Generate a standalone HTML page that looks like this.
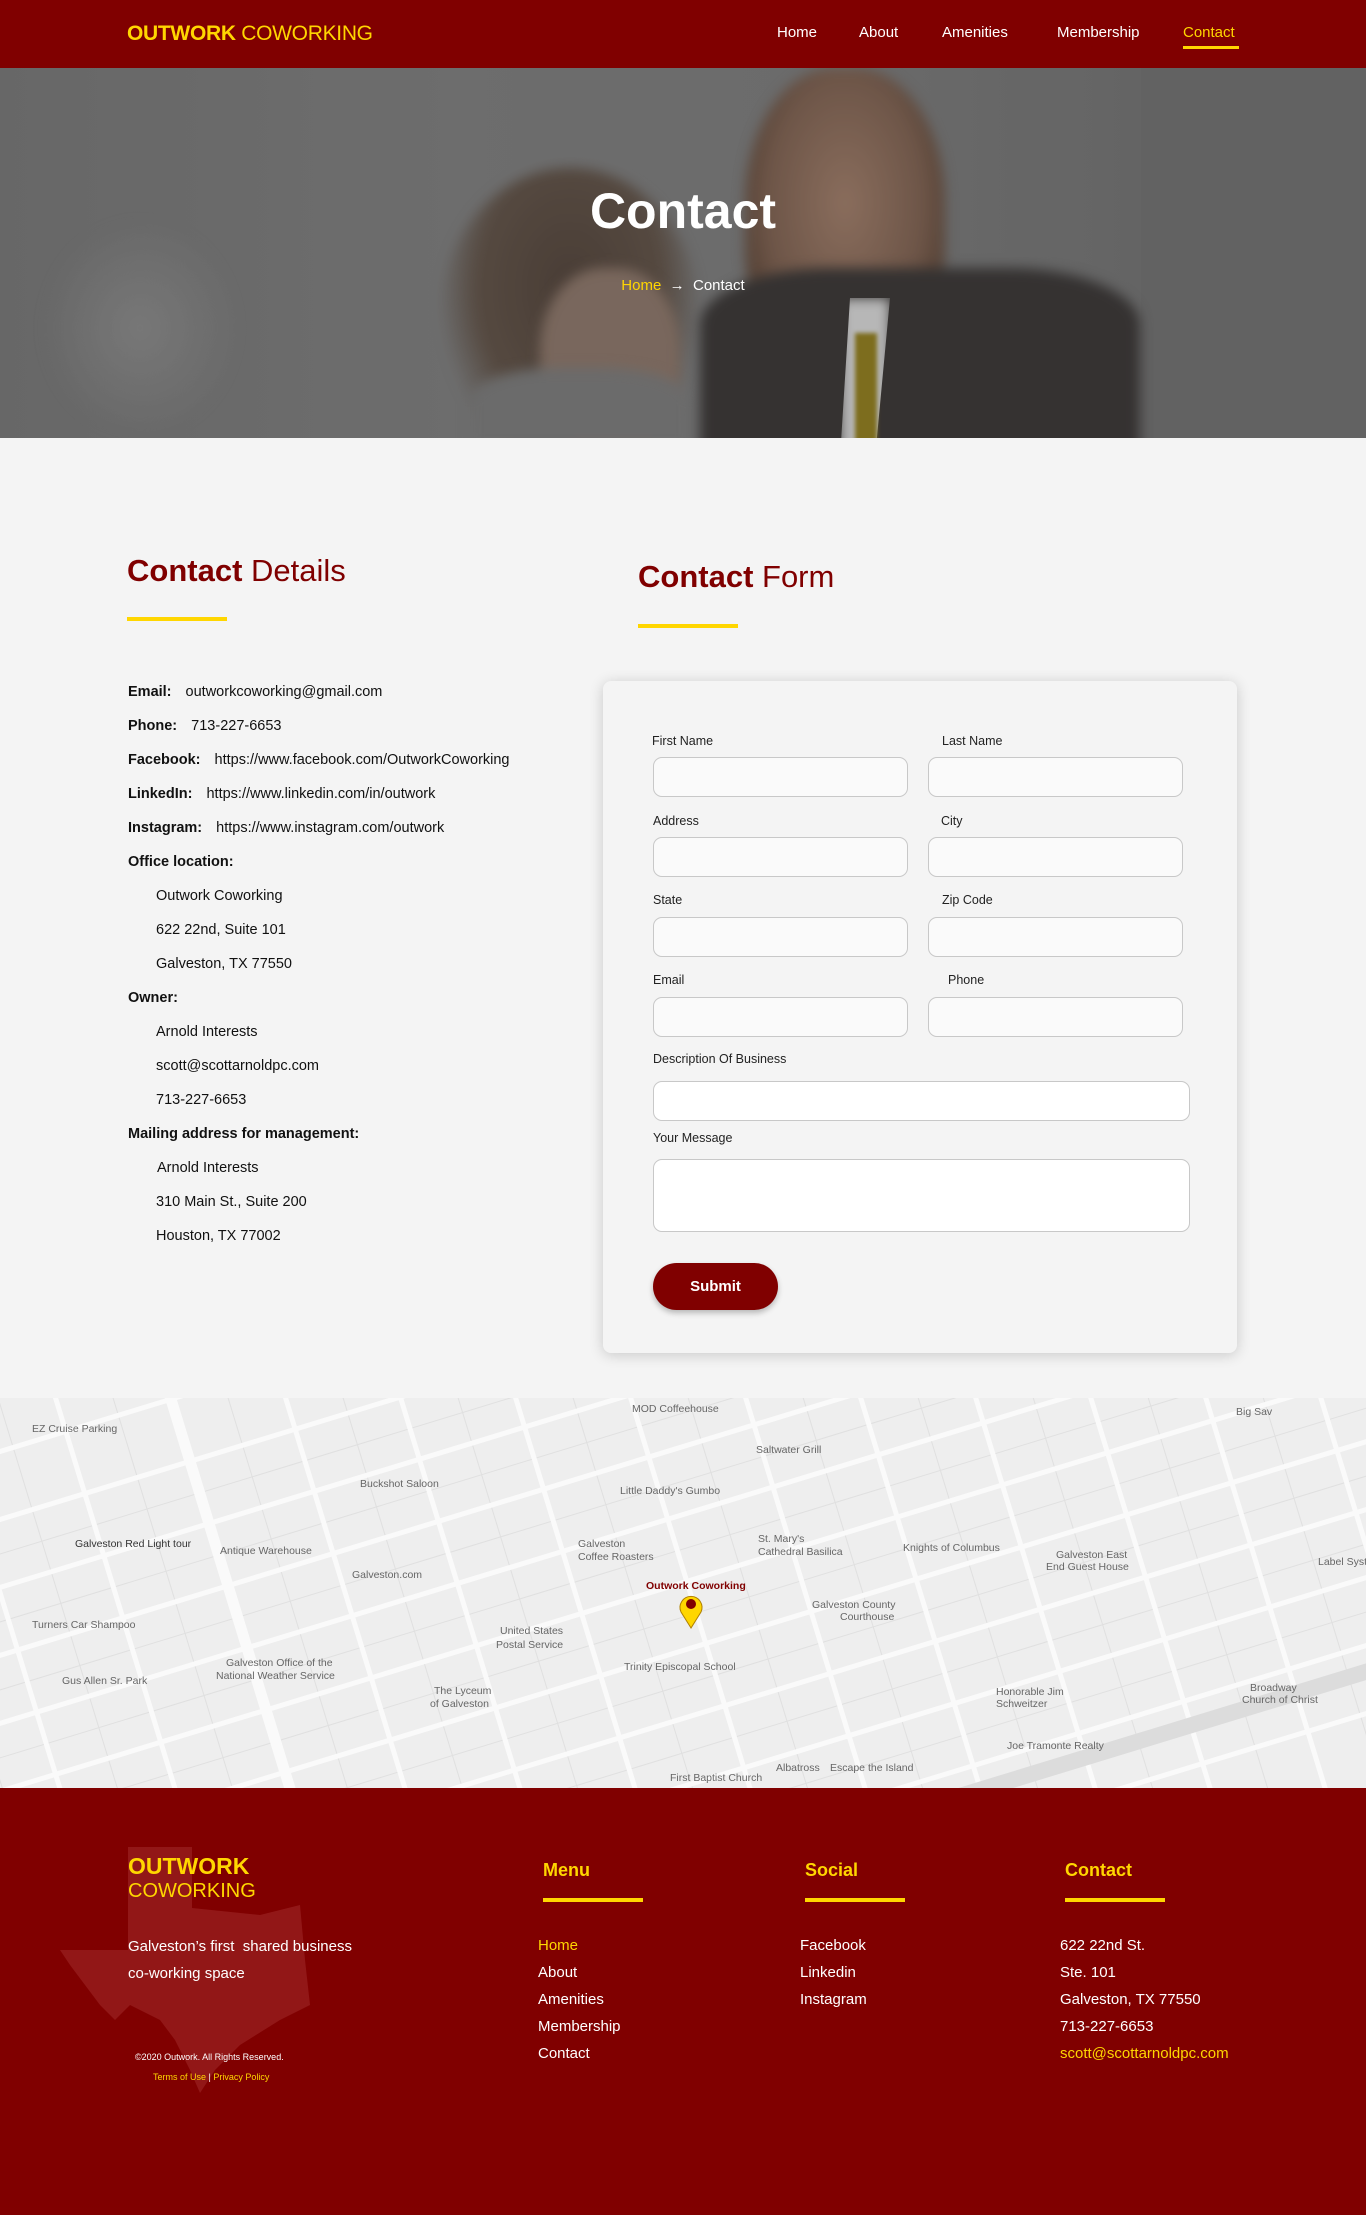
<!DOCTYPE html>
<html><head><meta charset="utf-8"><style>
*{margin:0;padding:0;box-sizing:border-box}
html{width:1366px;height:2215px;overflow:hidden}
body{width:1366px;height:2215px;background:#f4f4f4;font-family:"Liberation Sans",sans-serif;position:relative;overflow:hidden}
.abs{position:absolute}
nav{position:absolute;top:0;left:0;width:1366px;height:68px;background:#800000}
.logo{left:127px;top:22px;font-size:21px;color:#ffd600;letter-spacing:-0.3px}
.nav a{position:absolute;top:24px;font-size:15px;color:#fff;text-decoration:none}
.hero{top:68px;left:0;width:1366px;height:370px;background:#6b6b6b;overflow:hidden}
.bl{filter:blur(6px)}
h2{position:absolute;font-size:31px;color:#800000;font-weight:normal}
h2 b{font-weight:bold}
.ul{position:absolute;height:4px;width:100px;background:#ffd600}
.det{position:absolute;left:128px;font-size:14.5px;color:#111}
.det b{font-weight:bold;margin-right:10px}
.card{left:603px;top:681px;width:634px;height:672px;background:#f4f4f4;border-radius:8px;box-shadow:0 2px 14px rgba(0,0,0,.18)}
.lbl{position:absolute;font-size:12.5px;color:#222}
.inp{position:absolute;height:40px;border:1px solid #c8c8c8;border-radius:9px;background:#fafafa}
.btn{left:653px;top:1263px;width:125px;height:47px;border-radius:24px;background:#800000;color:#fff;font-weight:bold;font-size:15px;text-align:center;line-height:47px;box-shadow:0 3px 6px rgba(0,0,0,.25)}
footer{position:absolute;top:1788px;left:0;width:1366px;height:427px;background:#800000}
.fh{position:absolute;top:1860px;font-size:18px;font-weight:bold;color:#ffd600}
.ful{position:absolute;top:1898px;width:100px;height:4px;background:#ffd600}
.fl{position:absolute;font-size:15px;color:#fff;line-height:27px}
.map text{font-family:"Liberation Sans",sans-serif;font-size:10.5px;fill:#666}
</style></head><body>
<nav>
<div class="abs logo"><b>OUTWORK</b> COWORKING</div>
<div class="nav">
<a style="left:777px">Home</a><a style="left:859px">About</a><a style="left:942px">Amenities</a><a style="left:1057px">Membership</a><a style="left:1183px;color:#ffd600">Contact</a>
</div>
<div class="abs" style="left:1183px;top:46px;width:56px;height:3px;background:#ffd600"></div>
</nav>
<div class="abs hero">
<div class="abs" style="left:0;top:0;width:1141px;height:370px;background:linear-gradient(90deg,#727272,#7a7a7a 40%,#777 70%,#6e6e6e)"></div>
<div class="abs bl" style="left:40px;top:150px;width:200px;height:220px;background:radial-gradient(ellipse,#888,transparent 70%)"></div>
<div class="abs bl" style="left:440px;top:100px;width:260px;height:300px;border-radius:50% 50% 10% 10%;background:radial-gradient(ellipse at 50% 40%,#4a3a30,#5a4a3e 50%,transparent 72%)"></div>
<div class="abs bl" style="left:540px;top:200px;width:140px;height:180px;border-radius:45%;background:#8a7264"></div>
<div class="abs bl" style="left:470px;top:300px;width:220px;height:80px;background:#777;border-radius:40% 40% 0 0"></div>
<div class="abs bl" style="left:745px;top:0;width:200px;height:300px;border-radius:45% 45% 40% 40%;background:radial-gradient(ellipse at 50% 45%,#a07a64,#7a5a48 55%,#5a4030 75%,transparent 80%)"></div>
<div class="abs bl" style="left:700px;top:200px;width:440px;height:190px;background:#2f2b2a;border-radius:30% 30% 0 0"></div>
<div class="abs bl" style="left:840px;top:230px;width:50px;height:160px;background:#ddd;clip-path:polygon(20% 0,100% 0,70% 100%,0 100%)"></div>
<div class="abs" style="left:855px;top:265px;width:22px;height:110px;background:#8f7a10;filter:blur(2px)"></div>
<div class="abs" style="left:0;top:0;width:1366px;height:370px;background:rgba(70,70,70,.25)"></div>
<div class="abs" style="left:0;top:114px;width:1366px;text-align:center;font-size:50px;font-weight:bold;color:#fff">Contact</div>
<div class="abs" style="left:0;top:209px;width:1366px;text-align:center;font-size:15px;color:#fff"><span style="color:#ffd600">Home</span> &nbsp;→&nbsp; Contact</div>
</div>

<h2 style="left:127px;top:553px"><b>Contact</b> Details</h2>
<div class="ul" style="left:127px;top:617px"></div>
<h2 style="left:638px;top:559px"><b>Contact</b> Form</h2>
<div class="ul" style="left:638px;top:624px"></div>

<div class="det" style="top:684px"><b>Email:</b> outworkcoworking@gmail.com</div>
<div class="det" style="top:718px"><b>Phone:</b> 713-227-6653</div>
<div class="det" style="top:752px"><b>Facebook:</b> https://www.facebook.com/OutworkCoworking</div>
<div class="det" style="top:786px"><b>LinkedIn:</b> https://www.linkedin.com/in/outwork</div>
<div class="det" style="top:820px"><b>Instagram:</b> https://www.instagram.com/outwork</div>
<div class="det" style="top:854px"><b>Office location:</b></div>
<div class="det" style="top:888px;left:156px">Outwork Coworking</div>
<div class="det" style="top:922px;left:156px">622 22nd, Suite 101</div>
<div class="det" style="top:956px;left:156px">Galveston, TX 77550</div>
<div class="det" style="top:990px"><b>Owner:</b></div>
<div class="det" style="top:1024px;left:156px">Arnold Interests</div>
<div class="det" style="top:1058px;left:156px">scott@scottarnoldpc.com</div>
<div class="det" style="top:1092px;left:156px">713-227-6653</div>
<div class="det" style="top:1126px"><b>Mailing address for management:</b></div>
<div class="det" style="top:1160px;left:157px">Arnold Interests</div>
<div class="det" style="top:1194px;left:156px">310 Main St., Suite 200</div>
<div class="det" style="top:1228px;left:156px">Houston, TX 77002</div>

<div class="abs card"></div>
<div class="lbl" style="left:652px;top:734px">First Name</div><div class="lbl" style="left:942px;top:734px">Last Name</div>
<div class="inp" style="left:653px;top:757px;width:255px"></div><div class="inp" style="left:928px;top:757px;width:255px"></div>
<div class="lbl" style="left:653px;top:814px">Address</div><div class="lbl" style="left:941px;top:814px">City</div>
<div class="inp" style="left:653px;top:837px;width:255px"></div><div class="inp" style="left:928px;top:837px;width:255px"></div>
<div class="lbl" style="left:653px;top:893px">State</div><div class="lbl" style="left:942px;top:893px">Zip Code</div>
<div class="inp" style="left:653px;top:917px;width:255px"></div><div class="inp" style="left:928px;top:917px;width:255px"></div>
<div class="lbl" style="left:653px;top:973px">Email</div><div class="lbl" style="left:948px;top:973px">Phone</div>
<div class="inp" style="left:653px;top:997px;width:255px"></div><div class="inp" style="left:928px;top:997px;width:255px"></div>
<div class="lbl" style="left:653px;top:1052px">Description Of Business</div>
<div class="inp" style="left:653px;top:1081px;width:537px;background:#fff"></div>
<div class="lbl" style="left:653px;top:1131px">Your Message</div>
<div class="inp" style="left:653px;top:1159px;width:537px;height:73px;background:#fff"></div>
<div class="abs btn">Submit</div>

<svg class="abs map" style="left:0;top:1398px;overflow:hidden" width="1366" height="390" viewBox="0 0 1366 390">
<rect width="1366" height="390" fill="#eeeeee"/>
<g transform="rotate(-17 683 195)" fill="none">
<g stroke="#e0e0e0" stroke-width="1">
<line x1="-400" y1="-42" x2="1800" y2="-42"/><line x1="-400" y1="23" x2="1800" y2="23"/><line x1="-400" y1="88" x2="1800" y2="88"/><line x1="-400" y1="153" x2="1800" y2="153"/><line x1="-400" y1="218" x2="1800" y2="218"/><line x1="-400" y1="283" x2="1800" y2="283"/><line x1="-400" y1="348" x2="1800" y2="348"/><line x1="-400" y1="413" x2="1800" y2="413"/>
<line x1="-25" y1="-400" x2="-25" y2="800"/><line x1="85" y1="-400" x2="85" y2="800"/><line x1="195" y1="-400" x2="195" y2="800"/><line x1="305" y1="-400" x2="305" y2="800"/><line x1="415" y1="-400" x2="415" y2="800"/><line x1="525" y1="-400" x2="525" y2="800"/><line x1="635" y1="-400" x2="635" y2="800"/><line x1="745" y1="-400" x2="745" y2="800"/><line x1="855" y1="-400" x2="855" y2="800"/><line x1="965" y1="-400" x2="965" y2="800"/><line x1="1075" y1="-400" x2="1075" y2="800"/><line x1="1185" y1="-400" x2="1185" y2="800"/><line x1="1295" y1="-400" x2="1295" y2="800"/>
</g>
<g stroke="#fafafa" stroke-width="5">
<line x1="-400" y1="-140" x2="1800" y2="-140"/><line x1="-400" y1="-75" x2="1800" y2="-75"/><line x1="-400" y1="-10" x2="1800" y2="-10"/><line x1="-400" y1="55" x2="1800" y2="55"/><line x1="-400" y1="120" x2="1800" y2="120"/><line x1="-400" y1="185" x2="1800" y2="185"/><line x1="-400" y1="250" x2="1800" y2="250"/><line x1="-400" y1="315" x2="1800" y2="315"/><line x1="-400" y1="380" x2="1800" y2="380"/><line x1="-400" y1="445" x2="1800" y2="445"/><line x1="-400" y1="510" x2="1800" y2="510"/>
<line x1="-80" y1="-400" x2="-80" y2="800"/><line x1="30" y1="-400" x2="30" y2="800"/><line x1="140" y1="-400" x2="140" y2="800"/><line x1="360" y1="-400" x2="360" y2="800"/><line x1="470" y1="-400" x2="470" y2="800"/><line x1="580" y1="-400" x2="580" y2="800"/><line x1="690" y1="-400" x2="690" y2="800"/><line x1="800" y1="-400" x2="800" y2="800"/><line x1="910" y1="-400" x2="910" y2="800"/><line x1="1020" y1="-400" x2="1020" y2="800"/><line x1="1130" y1="-400" x2="1130" y2="800"/><line x1="1240" y1="-400" x2="1240" y2="800"/><line x1="1350" y1="-400" x2="1350" y2="800"/><line x1="1460" y1="-400" x2="1460" y2="800"/>
</g>
<line x1="250" y1="-400" x2="250" y2="800" stroke="#fafafa" stroke-width="11"/>
<line x1="-400" y1="470" x2="1800" y2="470" stroke="#dcdcdc" stroke-width="16"/>
</g>
<text x="32" y="34">EZ Cruise Parking</text>
<text x="360" y="89">Buckshot Saloon</text>
<text x="75" y="149" style="fill:#333">Galveston Red Light tour</text>
<text x="220" y="156">Antique Warehouse</text>
<text x="352" y="180">Galveston.com</text>
<text x="32" y="230">Turners Car Shampoo</text>
<text x="62" y="286">Gus Allen Sr. Park</text>
<text x="226" y="268">Galveston Office of the</text>
<text x="216" y="281">National Weather Service</text>
<text x="500" y="236">United States</text><text x="496" y="250">Postal Service</text>
<text x="434" y="296">The Lyceum</text><text x="430" y="309">of Galveston</text>
<text x="632" y="14">MOD Coffeehouse</text>
<text x="620" y="96">Little Daddy's Gumbo</text>
<text x="578" y="149">Galveston</text><text x="578" y="162">Coffee Roasters</text>
<text x="756" y="55">Saltwater Grill</text>
<text x="758" y="144">St. Mary's</text><text x="758" y="157">Cathedral Basilica</text>
<text x="903" y="153">Knights of Columbus</text>
<text x="812" y="210">Galveston County</text><text x="840" y="222">Courthouse</text>
<text x="624" y="272">Trinity Episcopal School</text>
<text x="1056" y="160">Galveston East</text><text x="1046" y="172">End Guest House</text>
<text x="1236" y="17">Big Sav</text>
<text x="1250" y="293">Broadway</text><text x="1242" y="305">Church of Christ</text>
<text x="996" y="297">Honorable Jim</text><text x="996" y="309">Schweitzer</text>
<text x="1007" y="351">Joe Tramonte Realty</text>
<text x="776" y="373">Albatross</text>
<text x="830" y="373">Escape the Island</text>
<text x="670" y="383">First Baptist Church</text>
<text x="1318" y="167">Label Syste</text>
<text x="646" y="191" font-weight="bold" style="font-size:10.5px;fill:#800000">Outwork Coworking</text>
<path d="M691 230 l-10 -16 a11 11 0 1 1 20 0 z" fill="#ffd600" stroke="#b08000"/>
<circle cx="691" cy="206" r="5" fill="#800000"/>
</svg>

<footer></footer>
<svg class="abs" style="left:0;top:1788px" width="400" height="320">
<polygon points="128,59 192,59 192,120 260,127 300,117 305,172 310,217 280,232 240,257 215,282 200,305 190,282 175,252 160,232 140,222 130,217 115,232 100,217 85,197 70,177 60,162 128,162" fill="#a02a2a" opacity=".55"/>
</svg>
<div class="abs" style="left:128px;top:1853px;font-size:23px;font-weight:bold;color:#ffd600;line-height:26px">OUTWORK</div>
<div class="abs" style="left:128px;top:1880px;font-size:20px;color:#ffd600">COWORKING</div>
<div class="fl" style="left:128px;top:1933px">Galveston’s first&nbsp; shared business<br>co-working space</div>
<div class="abs" style="left:135px;top:2052px;font-size:9px;color:#fff">©2020 Outwork. All Rights Reserved.</div>
<div class="abs" style="left:153px;top:2072px;font-size:9px;color:#ffd600">Terms of Use <span style="color:#fff">|</span> Privacy Policy</div>
<div class="fh" style="left:543px">Menu</div><div class="ful" style="left:543px"></div>
<div class="fh" style="left:805px">Social</div><div class="ful" style="left:805px"></div>
<div class="fh" style="left:1065px">Contact</div><div class="ful" style="left:1065px"></div>
<div class="fl" style="left:538px;top:1932px"><span style="color:#ffd600">Home</span><br>About<br>Amenities<br>Membership<br>Contact</div>
<div class="fl" style="left:800px;top:1932px">Facebook<br>Linkedin<br>Instagram</div>
<div class="fl" style="left:1060px;top:1932px">622 22nd St.<br>Ste. 101<br>Galveston, TX 77550<br>713-227-6653<br><span style="color:#ffd600">scott@scottarnoldpc.com</span></div>
</body></html>
